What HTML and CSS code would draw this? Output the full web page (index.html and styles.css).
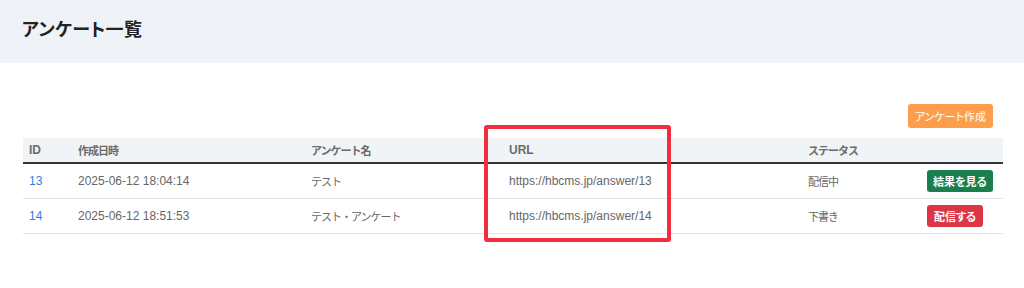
FILE: index.html
```html
<!DOCTYPE html>
<html lang="ja">
<head>
<meta charset="utf-8">
<link rel="stylesheet" href="styles.css">
</head>
<body>
<header class="page-head">
  <h1 class="title">アンケート一覧</h1>
</header>
<main class="content">
  <div class="actions">
    <button class="btn btn-orange">アンケート作成</button>
  </div>
  <table class="list">
    <colgroup>
      <col class="c-id"><col class="c-date"><col class="c-name"><col class="c-url"><col class="c-status"><col class="c-act">
    </colgroup>
    <thead>
      <tr><th class="latin">ID</th><th>作成日時</th><th>アンケート名</th><th class="latin">URL</th><th>ステータス</th><th></th></tr>
    </thead>
    <tbody>
      <tr>
        <td class="latin"><a class="id-link" href="#">13</a></td>
        <td class="latin">2025-06-12 18:04:14</td>
        <td>テスト</td>
        <td class="latin">https://hbcms.jp/answer/13</td>
        <td>配信中</td>
        <td><button class="btn btn-green">結果を見る</button></td>
      </tr>
      <tr>
        <td class="latin"><a class="id-link" href="#">14</a></td>
        <td class="latin">2025-06-12 18:51:53</td>
        <td>テスト・アンケート</td>
        <td class="latin">https://hbcms.jp/answer/14</td>
        <td>下書き</td>
        <td><button class="btn btn-red">配信する</button></td>
      </tr>
    </tbody>
  </table>
  <div class="highlight"></div>
</main>
</body>
</html>
```
FILE: styles.css
```css
* { box-sizing: border-box; }
html, body { margin: 0; padding: 0; background: #fff; }
body {
  font-family: "Liberation Sans", "Noto Sans CJK JP", sans-serif;
  color: #555;
  width: 1024px;
  height: 288px;
  overflow: hidden;
}
.page-head {
  background: #eff3f7;
  height: 63px;
  padding: 15px 22px 0;
}
.title {
  margin: 0;
  font-size: 18px;
  line-height: 27px;
  font-weight: 700;
  color: #222;
  font-family: "Noto Sans CJK JP", sans-serif;
  font-feature-settings: "palt";
  letter-spacing: 0.3px;
}
.content {
  position: relative;
  padding: 41px 21px 0 23px;
}
.actions {
  display: flex;
  justify-content: flex-end;
  padding-right: 10px;
  margin-bottom: 10px;
}
.btn {
  font-family: "Noto Sans CJK JP", sans-serif;
  font-feature-settings: "palt";
  border: none;
  border-radius: 3px;
  color: #fff;
  font-size: 11px;
  padding: 0 8px;
  cursor: pointer;
  letter-spacing: 0;
}
.btn-orange { background: #fd9e4d; height: 24px; padding: 0 7px; }
.btn-green { background: #1a7f4c; height: 22px; font-weight: 700; padding: 0 6px; }
.btn-red { background: #dc3545; height: 22px; font-weight: 700; padding: 0 7px; }
.list {
  width: 980px;
  border-collapse: collapse;
  table-layout: fixed;
  font-family: "Noto Sans CJK JP", sans-serif;
  font-size: 11px;
  letter-spacing: -1px;
}
.list .latin {
  font-family: "Liberation Sans", "Noto Sans CJK JP", sans-serif;
  font-size: 12px;
  letter-spacing: 0;
}
.c-id { width: 49px; }
.c-date { width: 233px; }
.c-name { width: 198px; }
.c-url { width: 299px; }
.c-status { width: 119px; }
.c-act { width: 82px; }
.list th {
  background: #f1f4f7;
  text-align: left;
  font-weight: 700;
  color: #6b6b6b;
  height: 25px;
  padding: 0 6px;
  border-bottom: 2px solid #333;
}
.list td {
  height: 35px;
  padding: 0 6px;
  border-bottom: 1px solid #e2e5e8;
  color: #666;
  white-space: nowrap;
}
.id-link { color: #2f7fe0; text-decoration: none; }
.highlight {
  position: absolute;
  left: 484px;
  top: 62px;
  width: 187px;
  height: 117px;
  border: 4px solid #f02e3e;
  border-radius: 3px;
  pointer-events: none;
}
```
